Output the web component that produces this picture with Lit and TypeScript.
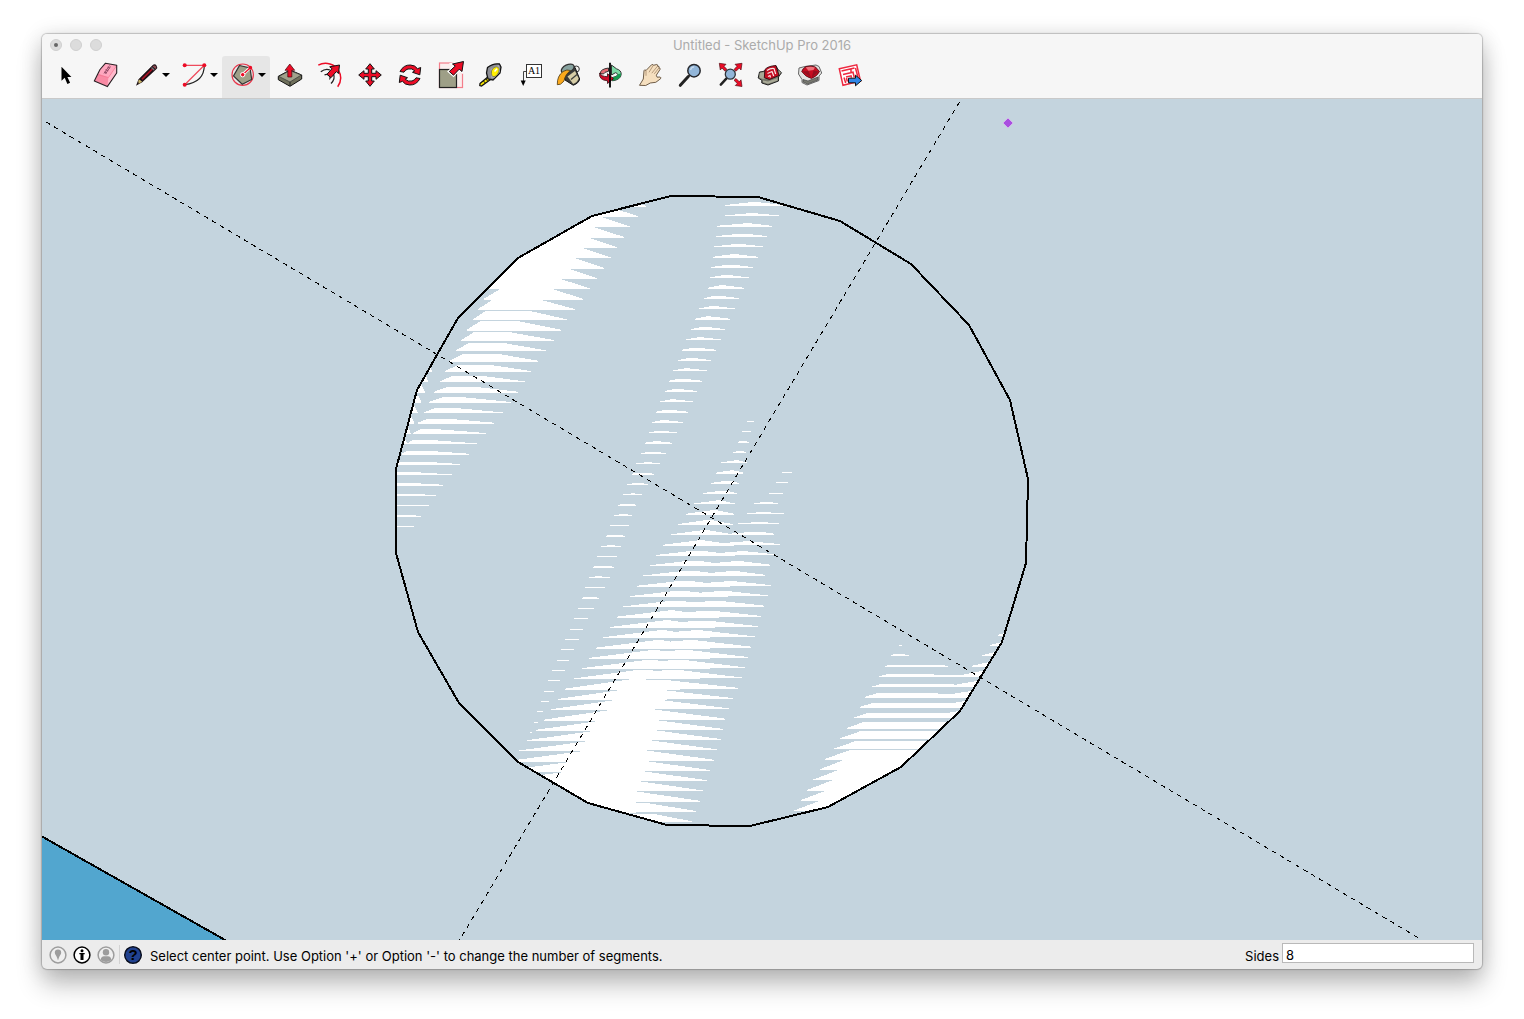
import { LitElement, html, svg, css, TemplateResult, SVGTemplateResult } from "lit";
import { customElement, state } from "lit/decorators.js";

/** Row number, left tip, top-left, top-right, right tip, height. */
type Key = [number, number, number, number, number, number];

interface Band {
  start: number;
  step: number;
  keys: Key[];
}

const OUTLINE =
  "671,196 758,197 840,221 911,264 969,325 1010,400 1028,479 1026,563 1002,642 960,711 901,767 828,807 " +
  "750,826 667,825 588,803 518,762 459,703 418,632 396,553 396,469 417,390 458,318 518,258 592,216";

const BANDS: Band[] = [
  {
    start: 217, step: 10.33,
    keys: [
      [-1, 400, 500, 600, 646, 10.6], [0, 400, 500, 607, 638, 10.6], [1, 400, 500, 600, 630, 10.6],
      [5, 400, 500, 575, 604, 10.6], [8, 484, 500, 552, 583, 10.6], [9, 478, 493, 539, 575, 10.6],
      [10, 473, 486, 528, 567, 9.8], [12, 461, 474, 510, 554, 8.8], [14, 450, 463, 500, 538, 7.4],
      [18, 429, 443, 464, 511, 5.6], [22, 407, 413, 432, 477, 4.2], [26, 385, 390, 415, 443, 2.4],
      [30, 380, 385, 405, 414, 1],
    ],
  },
  {
    start: 217, step: 10.33,
    keys: [[15, 380, 380, 429, 432, 7], [22, 380, 380, 404, 407, 8]],
  },
  {
    start: 206, step: 10.33,
    keys: [
      [0, 725, 752, 757, 783, 4], [1, 725, 750, 753, 779, 3.2], [2, 717, 745, 750, 772, 3.4],
      [8, 708, 720, 723, 744, 3.4], [14, 682, 694, 697, 716, 3], [20, 656, 666, 669, 688, 3],
      [24, 641, 652, 654, 666, 2.2], [29, 618, 627, 629, 636, 1.8], [36, 589, 598, 599, 610, 1.6],
      [40, 574, 580, 583, 588, 1], [46, 548, 551, 555, 560, 1], [51, 530, 530, 532, 532, 1],
    ],
  },
  {
    start: 206, step: 10.29,
    keys: [
      [21, 747, 749, 752, 754, 1], [24, 733, 739, 742, 746, 2], [25, 721, 735, 738, 747, 3],
      [27, 711, 727, 730, 739, 3.2], [29, 694, 717, 721, 735, 4], [31, 678, 707, 711, 733, 5],
      [34, 656, 695, 700, 735, 5.4], [38, 630, 678, 683, 728, 6.4], [42, 603, 660, 665, 710, 8],
      [45, 582, 648, 653, 710, 9.2], [46, 574, 640, 648, 700, 9.7], [47, 565, 632, 644, 680, 10.6],
      [50, 544, 611, 638, 642, 10.6], [53, 519, 590, 638, 642, 10.6], [56, 490, 568, 630, 636, 10.6],
      [60, 480, 520, 630, 636, 10.6],
    ],
  },
  {
    start: 206, step: 10.27,
    keys: [
      [26, 782, 784, 789, 792, 1], [28, 769, 772, 780, 783, 1], [29, 754, 765, 769, 778, 1.6],
      [30, 747, 762, 764, 784, 2], [32, 730, 755, 760, 774, 3], [33, 712, 745, 750, 780, 3.6],
      [36, 690, 728, 738, 765, 4.4], [37, 675, 726, 736, 771, 4.6], [40, 645, 706, 712, 761, 6.2],
      [44, 600, 680, 690, 748, 7.8], [46, 600, 668, 678, 742, 8.6], [47, 600, 655, 662, 738, 9.2],
      [48, 600, 645, 652, 733, 10.2], [50, 600, 620, 650, 725, 10.6], [52, 600, 620, 649, 721, 10.6],
      [55, 600, 620, 640, 710, 10.6], [58, 600, 620, 634, 700, 10.6], [60, 600, 620, 655, 692, 8],
    ],
  },
  {
    start: 646, step: 10.34,
    keys: [
      [0, 899, 899, 902, 902, 1], [1, 891, 894, 904, 909, 2], [2, 885, 893, 936, 948, 2],
      [3, 879, 888, 901, 1040, 3], [5, 865, 877, 930, 1060, 4.4], [7, 854, 867, 1000, 1040, 5.4],
      [9, 840, 860, 1000, 1040, 7.8], [10, 834, 857, 1000, 1040, 8.8], [11, 825, 850, 1000, 1040, 9.5],
      [12, 820, 845, 1000, 1040, 10.6], [16, 794, 820, 1000, 1040, 10.6],
    ],
  },
  {
    start: 646, step: 10.34,
    keys: [
      [-1, 998, 1025, 1030, 1040, 8], [0, 990, 1017, 1030, 1040, 8], [1, 982, 1009, 1030, 1040, 8],
      [2, 972, 1004, 1030, 1040, 8], [3, 956, 992, 1030, 1040, 8], [5, 935, 985, 1030, 1040, 9],
      [8, 915, 960, 1030, 1040, 9],
    ],
  },
];

/** Each band is a stack of thin wedges whose shape is interpolated between its key rows. */
function bandPath({ start, step, keys }: Band): string {
  let d = "";
  for (let row = keys[0][0]; row <= keys[keys.length - 1][0]; row++) {
    const next = Math.max(1, keys.findIndex((k) => k[0] >= row));
    const a = keys[next - 1];
    const b = keys[next];
    const t = (row - a[0]) / (b[0] - a[0]);
    const [, l, tl, tr, r, h] = a.map((v, i) => v + (b[i] - v) * t);
    const y = start + row * step;
    d += `M${l.toFixed(1)} ${y.toFixed(1)}V${(y - 0.9).toFixed(1)}L${tl.toFixed(1)} ${(y - h).toFixed(1)}H${tr.toFixed(1)}L${r.toFixed(1)} ${(y - 0.9).toFixed(1)}V${y.toFixed(1)}Z`;
  }
  return d;
}

const RED = "#ec0c26";
const INK = "#111";

interface Tool {
  id: string;
  label: string;
  menu?: boolean;
  art: SVGTemplateResult;
}

const TOOLS: Tool[] = [
  {
    id: "select", label: "Select",
    art: svg`<path d="M9.500 5.800v14l3.200-3 2.700 6.200 2.700-1.200-2.700-5.800h4z" fill="#000"/>`,
  },
  {
    id: "eraser", label: "Eraser",
    art: svg`<path d="M8 8.500 13.500 2.200l11.200 2.100V12l-9.400 13.600-13-5.600z" fill="#f98aa4"/>
      <path d="M8 9l6-6.500 10.700 2-8.400 12L6 12.500z" fill="#ffa7bf"/>
      <path d="M15.300 25.600l1.200-9.300 8.200-12V12z" fill="#ffb9cb"/>
      <path d="M5 13.500l11.500 3 8.200-12" fill="none" stroke="#f4738f" stroke-width=".7"/>
      <path d="M8 8.500 13.500 2.200l11.200 2.100V12l-9.400 13.600-13-5.600z" fill="none" stroke="#2a2226" stroke-width="1.100" stroke-linejoin="round"/>
      <path d="M12 12.500l5.500-8M13.500 13l5-7.500M12 11l2.500 1M13.500 8.700l2.700 1M15.500 6.200l2.500 1" stroke="#8e4763" stroke-width=".9" fill="none"/>`,
  },
  {
    id: "line", label: "Line", menu: true,
    art: svg`<path d="M4 24.800l2.500-6.600L20.500 4.200q2.300-2 4 .2 1.600 2-.5 4L10.200 21.200z" fill="#1c1015"/>
      <path d="M9.300 17.800 20 7.300l1 1.200L10.500 19z" fill="#a51224"/><path d="M6.200 19.800l1.300-1.300 2.600 2.300-3.400 2z" fill="#c9b469"/>
      <path d="M21.200 4.800q1.700-1 2.700.5t-.4 2.700l-2.900-2.500z" fill="#8b4b52"/><path d="M19.500 6.500l2.700 2.500" stroke="#76777c" stroke-width="1.200"/>`,
  },
  {
    id: "arc", label: "2 Point Arc", menu: true,
    art: svg`<path d="M24.300 4.300q0 17-19.600 19.400" fill="none" stroke="#222" stroke-width="1.200"/>
      <path d="M4.700 4.300h19.600L4.700 23.700" fill="none" stroke="#ee4a5c" stroke-width="1.200"/>
      <g fill="${RED}"><circle cx="4.700" cy="4.300" r="2"/><circle cx="24.300" cy="4.300" r="2"/><circle cx="4.700" cy="23.700" r="2"/></g>`,
  },
  {
    id: "polygon", label: "Polygon", menu: true,
    art: svg`<circle cx="14.700" cy="13.700" r="10.700" fill="none" stroke="#e8384c" stroke-width="1.200"/>
      <path d="M11.500 4.500 22 7l1.700 11.500-9.500 4.800L5.500 15z" fill="#9fa088" stroke="#333" stroke-width="1.200"/>
      <path d="M14.700 13.700l7.600-7" stroke="#fff" stroke-width="3"/><path d="M14.700 13.700l7.600-7" stroke="${RED}" stroke-width="1.200"/>
      <circle cx="14.700" cy="13.700" r="2.200" fill="${RED}" stroke="#fff"/><circle cx="22.300" cy="6.700" r="1.900" fill="${RED}"/>`,
  },
  {
    id: "push", label: "Push/Pull",
    art: svg`<path d="M2.300 15.300 14 9l11.700 5v4L14 25.300 2.300 18.700z" fill="#6f705b" stroke="${INK}" stroke-linejoin="round"/>
      <path d="M2.800 15.400 14 9.500l11.200 4.600L14 21z" fill="#a1a28c" stroke="#333" stroke-width=".7"/><path d="M14 21v4" stroke="#222"/>
      <path d="M13.800 3l4.900 6.300h-2.900V16h-4V9.300H9z" fill="${RED}" stroke="#40080f" stroke-width=".7"/>`,
  },
  {
    id: "offset", label: "Offset",
    art: svg`<path d="M2.300 4.200C10 0 19 3.500 22.500 9.500S25 21 21.700 25.700" fill="none" stroke="${RED}" stroke-width="1.500"/>
      <path d="M4.800 10.700Q9.500 7 14 9M17.500 13q2 5-2.500 9.500" fill="none" stroke="#222" stroke-width="1.300"/>
      <path d="M8.500 14q2.500-1.500 4.500.5t.5 4" fill="none" stroke="#222" stroke-width="1.100"/>
      <path d="M23.500 4l-1 8.500-2.200-1.900-5.300 6.100-4-3.500 5-5.500L13.700 5.800z" fill="${RED}" stroke="${INK}"/>`,
  },
  {
    id: "move", label: "Move",
    art: svg`<path d="M14 2.700l4.300 5.300h-2.600v4.300H20V9.700l5.300 4.300-5.300 4.300v-2.600h-4.300V20h2.600L14 25.300 9.700 20h2.600v-4.300H8v2.600L2.700 14 8 9.700v2.600h4.300V8H9.700z" fill="${RED}" stroke="${INK}" stroke-linejoin="round"/>`,
  },
  {
    id: "rotate", label: "Rotate",
    art: svg`<g fill="${RED}" stroke="${INK}" stroke-linejoin="round"><path d="M4 10.500Q7.500 3.700 14.500 4q4.700.2 7 3.700l3.200-1.200-.9 7.300-7.300-2.500 2.300-1.500Q16 7 12 8q-2.700.7-4 3.200z"/>
      <path d="M24 17.500q-3.500 6.800-10.500 6.500-4.700-.2-7-3.700l-3.200 1.200.9-7.300 7.300 2.500-2.300 1.500q2.800 2.800 6.800 1.800 2.700-.7 4-3.200z"/></g>`,
  },
  {
    id: "scale", label: "Scale",
    art: svg`<rect x="3.500" y="2" width="23" height="24.500" fill="#fbeeee" stroke="#f47e8b" stroke-width="1.200"/>
      <rect x="3.500" y="8.500" width="17" height="18" fill="#9e9f87" stroke="#222" stroke-width="1.200"/>
      <path d="M27.500.5l-1.500 10-2.800-2.300-5.700 6-4.200-3.700 6-5.500L16.500 3z" fill="none" stroke="#fff" stroke-width="3"/>
      <path d="M27.500.5l-1.500 10-2.800-2.300-5.700 6-4.200-3.700 6-5.500L16.500 3z" fill="${RED}" stroke="${INK}"/>`,
  },
  {
    id: "tape", label: "Tape Measure",
    art: svg`<path d="M4 22.500l8.500-7 2.500 2.700-9.500 6.800-1.700-.5z" fill="#fae800" stroke="${INK}" stroke-width="1.300"/><path d="M7.500 20l1.800 2M10 18l1.500 2" stroke="${INK}"/>
      <path d="M11.500 6.500Q17 2 23.500 3l1.500 3-1 6-7 7-5-1-1.500-6z" fill="#8d8e94" stroke="${INK}" stroke-width="1.300"/>
      <path d="M14.500 8l8.500-4.200 1 7-6 6.500-3-.5z" fill="#a9aaae"/><path d="M15.500 10q1-3.500 4.700-4.200 4 .2 2.500 5.200-1.700 4.500-4.700 4.700t-2.500-5.700z" fill="#fff000" stroke="#55554a" stroke-width=".6"/><path d="M18.500 10.500l2.500-2.700" stroke="#fff" stroke-width="1.500"/>`,
  },
  {
    id: "text", label: "Text",
    art: svg`<rect x="10.500" y="3.500" width="15" height="13" fill="#fff" stroke="#333"/>
      <path d="M10 10.500H7.500V20" fill="none" stroke="#444"/><path d="M4.700 19.500h5L7.200 25z" fill="#000"/>
      <text class="tag" x="18" y="13" text-anchor="middle">A1</text>`,
  },
  {
    id: "paint", label: "Paint Bucket",
    art: svg`<circle cx="20.300" cy="8" r="3" fill="#f0f0ee" stroke="#333"/>
      <path d="M6 8 15 3.500l4 3L23.700 18q-1 4.500-6.500 6.200L9 19z" fill="#3c3d3b" stroke="${INK}" stroke-linejoin="round"/>
      <path d="M11.500 15.500l7.500-5.500 3.700 7.500q-1.500 4-5.500 5.500z" fill="#d6cda6"/><path d="M15 18.500l6-5" stroke="#3c3d3b" stroke-width="1.300"/>
      <ellipse cx="11.700" cy="7.700" rx="6.900" ry="3.900" transform="rotate(-26 11.700 7.700)" fill="#87a29f" stroke="#333" stroke-width="1.300"/>
      <path d="M1.300 23.700Q1 15 7 10.500q4-2.500 7.500-1Q9 13.500 8 20 4.500 24.500 1.300 23.700z" fill="#fba91c" stroke="#4d3a17" stroke-width=".8"/>`,
  },
  {
    id: "orbit", label: "Orbit",
    art: svg`<path d="M15.500 7V4l5 3.800q5 1.500 4.700 5.700-.7 5.300-8.700 6.300v-3.300q5-.7 5.200-3-.7-1.700-2.200-1.800L15.500 14z" fill="#7ddba6" stroke="#222" stroke-width=".9"/>
      <path d="M25 12.500q.5 6-8.500 7.300v-3.500q5-.7 5.200-3z" fill="#169a50"/>
      <path d="M4 12.500Q4.500 8 12.500 7v3.300q-4.500.7-5 2.700z" fill="#e36f75" stroke="#222" stroke-width=".9"/>
      <path d="M3.700 12q1.300 3.500 7.800 3.700v-3l6 5-6 4.800v-2.700Q2.500 19 3.700 12z" fill="#cf0c29" stroke="#35090f" stroke-width=".8"/>
      <path d="M14 1.700V26.500" stroke="#000" stroke-width="1.800"/>`,
  },
  {
    id: "pan", label: "Pan",
    art: svg`<path d="M3.500 24.300l3.800-6.300.7-8.300Q8.500 8 10 9.500l5.500-5.700q1.700-1 1.800.5l3.500-.8q1.500.3.7 1.700 2.300-.2 1.500 1.600 1.700.3 1 1.700l-3.700 5.700.8 2 3-.2q1.300.6.4 1.800l-4.700 3.500-5.500.7-4.600 2.500z" fill="#f5dfbf" stroke="#5f4c37" stroke-width=".9"/>
      <path d="M17.300 4.300l-4.300 7M21.500 5.200l-5.700 7M23 6.800l-4.700 6M10 9.500v5.300" stroke="#a38769" stroke-width=".8"/>`,
  },
  {
    id: "zoom", label: "Zoom",
    art: svg`<path d="M4.300 24.300l8-8.700" stroke="#222" stroke-width="3" stroke-linecap="round"/><path d="M12 16l2.500-2.700" stroke="#222" stroke-width="1.500"/>
      <circle cx="18" cy="9.700" r="6.200" fill="#92b6d9" stroke="#26282d" stroke-width="1.500"/><path d="M14.500 9q.7-3 3.700-3.200" fill="none" stroke="#c9dcee" stroke-width="1.200"/>`,
  },
  {
    id: "extents", label: "Zoom Extents",
    art: svg`<g fill="${RED}" stroke="#541019" stroke-width=".7"><path d="M3.300 2.300l6.700 1-2 2 3 3.200-2 1.800-3-3.300-1.700 2z"/>
      <path d="M26 2.300l-1 6.700-1.700-2-3.300 3.300-2-1.800 3-3.200-2-2zM26 25.500l-6.700-1 2-2-3.300-3.200 2-1.800 3.300 3.300 1.700-2z"/></g>
      <path d="M4.800 23.700l5.500-6" stroke="#222" stroke-width="2.500" stroke-linecap="round"/>
      <circle cx="14.300" cy="13.200" r="5" fill="#92b6d9" stroke="#30343a" stroke-width="1.300"/>`,
  },
  {
    id: "warehouse", label: "3D Warehouse",
    art: svg`<path d="M7 10.500 3.500 11l-1.300 6 3.600 2.300V22l6.200 2 10.500-4v-4l3-4.300-3.500-3.200-2-3.500z" fill="#75766a" stroke="#222" stroke-linejoin="round"/>
      <path d="M3.800 12l4-1 2 7-3.500-.3-3-1.200zM22.500 9.500l2.200 2-2.500 3.700zM7 19.500l5 1 9.500-3.500v2.500l-9.500 3.300-5-1.500z" fill="#a9aa97"/>
      <path d="M9 8.500Q12 5 20 4.500l3 10-9.500 4-5.200-1.800z" fill="#c40e22" stroke="#2e0a0e" stroke-width=".9"/>
      <path d="M11 9.500q3.500-2.500 7-2l1.700 5.500M11.500 12.500l4.500-2 1.700 4.500M12 15.500l2-1 .5 2" fill="none" stroke="#fbe3e5" stroke-width="1.200"/>`,
  },
  {
    id: "extension", label: "Extension Warehouse",
    art: svg`<path d="M3 7l6-1.500L20 4l3 1.500L25.700 12 23 15v4.500L11 24l-5-2.500v-3L2.500 13z" fill="#e4e4e2" stroke="#666" stroke-linejoin="round"/>
      <path d="M7 18.500l5 1.500 10-4v3L11.500 23 7 21z" fill="#77786f" stroke="#444" stroke-width=".7"/>
      <path d="M5.700 10.500Q7 7 10 5.500q5-1.300 9.500.5l4 4.500q-2 4.500-8 7-6-1.500-9.800-7z" fill="#c80d21" stroke="#4b0a12" stroke-width=".8"/>
      <path d="M10 6.700l2.500 3 5-.7 1.500-2.500q-4.500-1.500-9-.2z" fill="#ee727b"/><path d="M6.500 10.500l6-.5 2.500 6.500zM17.500 9.500l5.200 1-7 6z" fill="#951020"/>`,
  },
  {
    id: "layout", label: "Send to LayOut",
    art: svg`<path d="M3.300 7.700l17.400-3.900L24.500 20 7 24.300z" fill="#fff" stroke="#ee2940" stroke-width="1.500"/>
      <path d="M5.500 10l13-3M15 8v3.500M19.500 7l2.500 9.500M7 13.500l10-2.300 1.300 5.300M8 16.500l1.700 5.500M10 16l5-1.200.5 2M10.500 17l.8 3.500" fill="none" stroke="#ee2940" stroke-width="1.500"/>
      <path d="M12.500 17.200h7v-3l6.200 5.300-6.200 5.300v-3h-7z" fill="#2f86e8" stroke="${INK}" stroke-linejoin="round"/>`,
  },
];

@customElement("app-root")
export class AppRoot extends LitElement {
  static styles = css`
    :host {
      display: block;
      font-family: Inter, "Liberation Sans", sans-serif;
      font-size: 13px;
      color: #000;
    }
    .desktop {
      box-sizing: border-box;
      display: flex;
      min-height: 100vh;
      padding: 34px 42px 50px;
      background: #fff;
    }
    .window {
      flex: 1;
      min-width: 0;
      display: flex;
      flex-direction: column;
      overflow: hidden;
      border-radius: 5px;
      background: #ececec;
      box-shadow: 0 0 1px 1px rgba(0, 0, 0, 0.2), 0 16px 26px rgba(0, 0, 0, 0.24), 0 2px 22px rgba(0, 0, 0, 0.14);
    }
    .titlebar {
      display: grid;
      grid-template-columns: 1fr auto 1fr;
      align-items: center;
      height: 22px;
      background: #f6f6f6;
    }
    .lights {
      display: flex;
      gap: 8px;
      padding-left: 8px;
    }
    .light {
      width: 12px;
      height: 12px;
      padding: 0;
      display: grid;
      place-items: center;
      border: 1px solid #cfcfcf;
      border-radius: 50%;
      background: #dcdcdc;
    }
    .edited {
      width: 4px;
      height: 4px;
      border-radius: 50%;
      background: #666;
    }
    .title {
      margin: 0;
      font-size: 13px;
      font-weight: 400;
      line-height: 22px;
      color: #ababab;
    }
    .toolbar {
      display: flex;
      height: 42px;
      padding-left: 4px;
      background: #f6f6f6;
      border-bottom: 1px solid #c9c9c9;
    }
    .tool {
      display: flex;
      width: 40px;
      padding: 5px 6px 0;
      border: 0;
      border-radius: 3px 3px 0 0;
      background: none;
    }
    .tool.menu {
      width: 48px;
      padding-right: 4px;
    }
    .tool.active {
      background: #e6e6e6;
    }
    .icon {
      flex: none;
      width: 28px;
      height: 28px;
    }
    .caret {
      flex: none;
      width: 8px;
      height: 28px;
      margin-left: 2px;
    }
    .tag {
      font: 10px "Liberation Serif", serif;
    }
    .viewport {
      flex: 1;
      min-height: 0;
      display: flex;
      background: #c4d4de;
    }
    .scene {
      display: block;
      width: 100%;
      height: auto;
    }
    .status {
      display: flex;
      align-items: center;
      height: 29px;
      padding: 0 8px 0 7px;
    }
    .round {
      display: flex;
      width: 24px;
      padding: 0;
      border: 0;
      background: none;
    }
    .glyph {
      width: 18px;
      height: 18px;
    }
    .rule {
      width: 1px;
      height: 19px;
      margin: 0 3px 0 -2px;
      background: #d2d2d2;
    }
    .help .glyph {
      width: 20px;
      height: 20px;
    }
    .mark {
      font: bold 15px "Liberation Sans", sans-serif;
    }
    .message {
      flex: 1;
      margin: 2px 0 0 3px;
      line-height: 16px;
      white-space: nowrap;
    }
    .measure {
      margin: 2px 3px 0 0;
      line-height: 16px;
    }
    .value {
      box-sizing: border-box;
      width: 192px;
      height: 20px;
      margin-bottom: 3px;
      padding: 4px 3px 0;
      border: 1px solid #b9b9b9;
      border-radius: 0;
      background: #fff;
      font: inherit;
    }
  `;

  @state() private active = "polygon";

  private renderTool(tool: Tool): TemplateResult {
    const on = tool.id === this.active;
    return html`<button
      class="tool ${tool.menu ? "menu" : ""} ${on ? "active" : ""}"
      aria-label=${tool.label}
      aria-pressed=${on}
      @click=${() => (this.active = tool.id)}
    >
      <svg class="icon" viewBox="0 0 28 28" aria-hidden="true">${tool.art}</svg>
      ${tool.menu
        ? html`<svg class="caret" viewBox="0 0 8 28" aria-hidden="true"><path d="M0 12h8l-4 4z" /></svg>`
        : ""}
    </button>`;
  }

  private renderScene(): TemplateResult {
    return html`<svg class="scene" viewBox="42 99 1440 841" preserveAspectRatio="xMidYMid slice" role="img" aria-label="Model view">
      <defs><clipPath id="disc"><polygon points=${OUTLINE} /></clipPath></defs>
      <rect x="42" y="99" width="1440" height="841" fill="#c4d4de" />
      <g clip-path="url(#disc)" fill="#fff" shape-rendering="crispEdges">
        ${BANDS.map((band) => svg`<path d=${bandPath(band)} />`)}
      </g>
      <polygon points="42,836 226,940 42,940" fill="#52a6cf" />
      <g fill="none" stroke="#000" shape-rendering="crispEdges">
        <path d="M42 836.500L226 940.500" stroke-width="2" />
        <polygon points=${OUTLINE} stroke-width="2" />
        <path d="M46 122L1422 940M959.500 102L459 941" stroke-dasharray="4.600 4.600" />
      </g>
      <path d="M1008 118l5 5-5 5-5-5z" fill="#a94fe0" stroke="#d9bdec" stroke-width=".8" />
    </svg>`;
  }

  render() {
    return html`<div class="desktop">
      <main class="window">
        <header class="titlebar">
          <div class="lights">
            <button class="light" aria-label="Close"><span class="edited"></span></button>
            <button class="light" aria-label="Minimize"></button>
            <button class="light" aria-label="Zoom window"></button>
          </div>
          <h1 class="title">Untitled - SketchUp Pro 2016</h1>
        </header>
        <nav class="toolbar" aria-label="Tools">${TOOLS.map((t) => this.renderTool(t))}</nav>
        <section class="viewport">${this.renderScene()}</section>
        <footer class="status">
          <button class="round" aria-label="Geo-location">
            <svg class="glyph" viewBox="0 0 18 18"><circle cx="9" cy="9" r="7.900" fill="#efefef" stroke="#9d9d9d" stroke-width="1.500" /><path d="M9 3.500a3.200 3.200 0 0 1 3.200 3.200c0 1.800-1.700 2.800-2.200 4.800L9 14.500l-1-3C7.500 9.500 5.800 8.500 5.800 6.700A3.200 3.200 0 0 1 9 3.500z" fill="#9d9d9d" /></svg>
          </button>
          <button class="round" aria-label="Credits">
            <svg class="glyph" viewBox="0 0 18 18"><circle cx="9" cy="9" r="7.900" fill="#fff" stroke="#000" stroke-width="1.500" /><circle cx="9" cy="4.800" r="1.500" /><path d="M6.300 7h5.400v1.300h-1.200V14H7.500V8.300H6.300z" /></svg>
          </button>
          <button class="round" aria-label="Sign in">
            <svg class="glyph" viewBox="0 0 18 18"><circle cx="9" cy="9" r="7.900" fill="#efefef" stroke="#9d9d9d" stroke-width="1.500" /><circle cx="9" cy="6.300" r="3.200" fill="#9d9d9d" /><path d="M3.700 14Q4 10.300 7 10.300h4q3 0 3.300 3.700Q9 18 3.700 14z" fill="#9d9d9d" /></svg>
          </button>
          <span class="rule"></span>
          <button class="round help" aria-label="Help">
            <svg class="glyph" viewBox="0 0 20 20"><circle cx="10" cy="10" r="9.500" fill="#fff" /><circle cx="10" cy="10" r="8.300" fill="#20418f" stroke="#0b1020" stroke-width="1.500" /><text class="mark" x="10" y="15" text-anchor="middle">?</text></svg>
          </button>
          <p class="message">Select center point. Use Option '+' or Option '-' to change the number of segments.</p>
          <label class="measure" for="sides">Sides</label>
          <input class="value" id="sides" type="text" value="8" />
        </footer>
      </main>
    </div>`;
  }
}
